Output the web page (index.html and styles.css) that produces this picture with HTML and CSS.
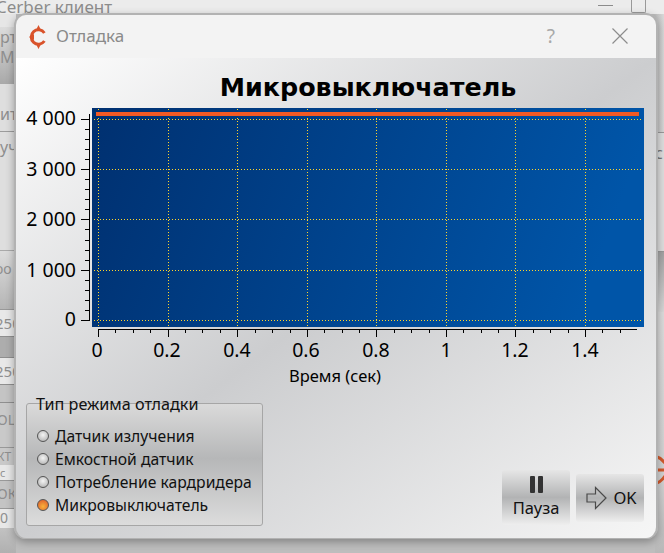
FILE: index.html
```html
<!DOCTYPE html>
<html>
<head>
  <meta charset="UTF-8">
  <title>Отладка</title>
  <link rel="stylesheet" href="styles.css">
</head>
<body>
  <div class="app">
    <div class="app-top">
      <span class="app-title">Cerber клиент</span>
      <div class="app-controls">
        <span class="app-min"></span>
        <span class="app-max"></span>
      </div>
    </div>
    <div class="app-main">
      <div class="side side-left">
        <div class="row r-a"></div>
        <div class="row r-b">рт<br>M</div>
        <div class="row r-c">ит</div>
        <div class="row r-d">уч</div>
        <div class="row r-e">оо</div>
        <div class="row r-f">250</div>
        <div class="row r-g"></div>
        <div class="row r-f">250</div>
        <div class="row r-h"></div>
        <div class="row r-i">ощ</div>
        <div class="row r-j">кт</div>
        <div class="row r-k">с</div>
        <div class="row r-l">ок</div>
        <div class="row r-m">0</div>
        <div class="row r-n"></div>
      </div>
      <div class="side side-right">
        <div class="row rr-a"></div>
        <div class="row rr-b">с</div>
        <div class="row rr-c"></div>
        <div class="row rr-d"></div>
        <svg class="rr-logo" width="10" height="40" viewBox="654 450 10 40">
          <path d="M654 456 Q660 458 664 463 M654 470 H664 M654 484 Q660 482 664 476" fill="none" stroke="#d2592c" stroke-width="3"/>
        </svg>
      </div>
    </div>
  </div>

  <div class="dialog">
    <div class="titlebar">
      <svg class="logo" width="20" height="26" viewBox="28 22 20 26">
        <path d="M44.4 31 A7.2 7.2 0 1 0 44.4 39" fill="none" stroke="#d9532b" stroke-width="3"/>
        <path d="M38.5 23 L41.5 29 H35.5 Z M38.5 47 L41.5 41 H35.5 Z M29 35 L34 32 V38 Z" fill="#d9532b"/>
      </svg>
      <span class="dialog-name">Отладка</span>
      <span class="help">?</span>
      <svg class="close" width="16" height="16" viewBox="0 0 16 16">
        <path d="M0.5 0.5 L15.5 15.5 M15.5 0.5 L0.5 15.5" stroke="#8c8c8c" stroke-width="1.2" fill="none"/>
      </svg>
    </div>

    <div class="body">
      <h1 class="plot-title">Микровыключатель</h1>

      <svg class="plot" width="638" height="286" viewBox="16 105 638 286">
        <defs>
          <linearGradient id="canvas" x1="0" y1="0" x2="1" y2="0.15">
            <stop offset="0" stop-color="#003070"/>
            <stop offset="1" stop-color="#0055a8"/>
          </linearGradient>
        </defs>
        <rect x="92" y="108" width="552" height="219" fill="url(#canvas)"/>

        <path class="grid" d="M98.5 109V326 M168.5 109V326 M237.5 109V326 M307.5 109V326 M376.5 109V326 M446.5 109V326 M515.5 109V326 M585.5 109V326"/>
        <path class="grid" d="M94 119.5H641 M94 169.5H641 M94 219.5H641 M94 270.5H641 M94 320.5H641"/>
        <rect x="96" y="112" width="543" height="4" fill="#f35a24"/>

        <!-- left axis -->
        <path class="axis" d="M89.5 114V321"/>
        <path class="axis" d="M81 119.5H90 M81 169.5H90 M81 219.5H90 M81 270.5H90 M81 320.5H90"/>
        <path class="axis" d="M85 129.5H90 M85 139.5H90 M85 149.5H90 M85 159.5H90 M85 179.5H90 M85 189.5H90 M85 199.5H90 M85 209.5H90 M85 229.5H90 M85 240.5H90 M85 250.5H90 M85 260.5H90 M85 280.5H90 M85 290.5H90 M85 300.5H90 M85 310.5H90"/>
        <text class="tick" x="76" y="125" text-anchor="end">4 000</text>
        <text class="tick" x="76" y="176" text-anchor="end">3 000</text>
        <text class="tick" x="76" y="226" text-anchor="end">2 000</text>
        <text class="tick" x="76" y="277" text-anchor="end">1 000</text>
        <text class="tick" x="76" y="326" text-anchor="end">0</text>

        <!-- bottom axis -->
        <path class="axis" d="M98 329.5H637"/>
        <path class="axis" d="M98.5 329V337 M168.5 329V337 M237.5 329V337 M307.5 329V337 M376.5 329V337 M446.5 329V337 M515.5 329V337 M585.5 329V337"/>
        <path class="axis" d="M115.5 329V333 M133.5 329V333 M150.5 329V333 M185.5 329V333 M202.5 329V333 M220.5 329V333 M255.5 329V333 M272.5 329V333 M290.5 329V333 M324.5 329V333 M342.5 329V333 M359.5 329V333 M394.5 329V333 M411.5 329V333 M429.5 329V333 M463.5 329V333 M481.5 329V333 M498.5 329V333 M533.5 329V333 M550.5 329V333 M568.5 329V333 M602.5 329V333 M620.5 329V333"/>
        <text class="tick" x="97" y="357" text-anchor="middle">0</text>
        <text class="tick" x="167" y="357" text-anchor="middle">0.2</text>
        <text class="tick" x="237" y="357" text-anchor="middle">0.4</text>
        <text class="tick" x="306" y="357" text-anchor="middle">0.6</text>
        <text class="tick" x="376" y="357" text-anchor="middle">0.8</text>
        <text class="tick" x="446" y="357" text-anchor="middle">1</text>
        <text class="tick" x="515" y="357" text-anchor="middle">1.2</text>
        <text class="tick" x="585" y="357" text-anchor="middle">1.4</text>
        <text class="axis-name" x="335" y="382" text-anchor="middle">Время (сек)</text>
      </svg>

      <div class="bottom">
        <fieldset class="modes">
          <legend>Тип режима отладки</legend>
          <label class="mode"><span class="led"></span>Датчик излучения</label>
          <label class="mode"><span class="led"></span>Емкостной датчик</label>
          <label class="mode"><span class="led"></span>Потребление кардридера</label>
          <label class="mode"><span class="led led-on"></span>Микровыключатель</label>
        </fieldset>
        <div class="buttons">
          <button class="btn btn-pause">
            <span class="pause-icon"><i></i><i></i></span>
            Пауза
          </button>
          <button class="btn btn-ok">
            <svg width="21" height="24" viewBox="0 0 21 24">
              <path d="M1 8 H9.5 V1.5 L20 12 L9.5 22.5 V16 H1 Z" fill="none" stroke="#4a4a4a" stroke-width="1.2"/>
            </svg>
            OK
          </button>
        </div>
      </div>
    </div>
  </div>
</body>
</html>
```

FILE: styles.css
```css
html, body {
  margin: 0;
  height: 100%;
  overflow: hidden;
}

body {
  font-family: "Noto Sans", sans-serif;
  background: #bdbdbd;
}

.app {
  height: 553px;
  display: flex;
  flex-direction: column;
  color: #8a8a8a;
}

.app-top {
  height: 14px;
  background: #ececec;
  display: flex;
  justify-content: space-between;
  overflow: hidden;
}

.app-title {
  font-size: 17px;
  line-height: 14px;
  margin-left: -4px;
  color: #8c8c8c;
}

.app-controls {
  display: flex;
  gap: 18px;
}

.app-min {
  width: 15px;
  height: 1px;
  margin-top: 5px;
  background: #8c8c8c;
}

.app-max {
  width: 13px;
  height: 12px;
  margin-right: 18px;
  border: 1px solid #999;
  border-top: none;
  border-radius: 0 0 2px 2px;
}

.app-main {
  flex: 1;
  display: flex;
  justify-content: space-between;
}

.side {
  display: flex;
  flex-direction: column;
  overflow: hidden;
  white-space: nowrap;
}

.side-left {
  width: 16px;
}

.side-right {
  width: 9px;
  position: relative;
}

.row {
  font-size: 16px;
  color: #8f8f8f;
  overflow: hidden;
}

.r-a { height: 14px; background: #e6e6e6; }
.r-b { height: 57px; background: linear-gradient(#dcdcdc, #a9a9a9); line-height: 20px; margin-top: -1px; }
.r-c { height: 47px; background: #dedede; border-bottom: 1px solid #9c9c9c; line-height: 60px; }
.r-d { height: 118px; background: #dedede; border-bottom: 1px solid #aaa; line-height: 30px; }
.r-e { height: 58px; background: linear-gradient(#dcdcdc, #b5b5b5); border-bottom: 1px solid #999; line-height: 36px; font-size: 14px; margin-left: -5px; }
.r-f { height: 26px; background: #e8e8e8; line-height: 26px; margin-left: -5px; font-size: 15px; }
.r-g { height: 20px; background: #adadad; border-top: 1px solid #8f8f8f; border-bottom: 1px solid #8f8f8f; }
.r-h { height: 17px; background: #c4c4c4; border-top: 1px solid #8f8f8f; border-bottom: 1px solid #8f8f8f; }
.r-i { height: 44px; background: #c9c9c9; border-bottom: 1px solid #999; line-height: 34px; text-transform: uppercase; font-size: 14px; margin-left: -3px; }
.r-j { height: 17px; background: #c9c9c9; line-height: 17px; text-transform: uppercase; font-size: 12px; margin-left: -3px; }
.r-k { height: 15px; background: #e8e8e8; line-height: 15px; font-size: 11px; }
.r-l { height: 27px; background: #c4c4c4; border-top: 1px solid #999; border-bottom: 1px solid #999; line-height: 26px; text-transform: uppercase; font-size: 14px; margin-left: -3px; }
.r-m { height: 19px; background: #e8e8e8; line-height: 18px; font-size: 14px; }
.r-n { flex: 1; background: linear-gradient(#c2c2c2, #b0b0b0); }

.rr-a { height: 118px; background: linear-gradient(90deg, #bdbdbd, #d8d8d8); border-bottom: 1px solid #999; }
.rr-b { height: 118px; background: #dedede; border-bottom: 1px solid #999; line-height: 40px; color: #777; }
.rr-c { height: 60px; background: linear-gradient(#a3a3a3, #d8d8d8); }
.rr-d { flex: 1; background: linear-gradient(#dcdcdc, #d2d2d2 70%, #b8b8b8); }

.rr-logo {
  position: absolute;
  left: 0;
  top: 436px;
}

.dialog {
  position: absolute;
  left: 14px;
  top: 13px;
  width: 640px;
  height: 523px;
  border: 2px solid #b2b2b2;
  border-width: 2px 2px 1px 2px;
  border-radius: 12px;
  overflow: hidden;
  display: flex;
  flex-direction: column;
  box-shadow: 0 3px 8px rgba(0,0,0,0.3);
}

.titlebar {
  height: 43px;
  flex: none;
  background: #f3f3f3;
  display: flex;
  align-items: center;
  padding-left: 12px;
}

.dialog-name {
  margin: 0 0 2px 8px;
  font-size: 17px;
  color: #8a8a8a;
}

.help {
  margin: 0 57px 2px auto;
  font-size: 19px;
  color: #a8a8a8;
}

.close {
  margin: 0 28px 2px 0;
}

.body {
  flex: 1;
  display: flex;
  flex-direction: column;
  background: linear-gradient(to bottom right, #ffffff, #cccdcf 50%, #f6f6f6);
}

.plot-title {
  margin: 0;
  height: 47px;
  padding: 13px 0 0 64px;
  box-sizing: border-box;
  font-family: "DejaVu Sans", sans-serif;
  text-align: center;
  font-size: 25.4px;
  line-height: 32px;
  color: #000;
}

.plot {
  display: block;
  flex: none;
}

.grid {
  fill: none;
  stroke: #ffd42a;
  stroke-width: 1;
  stroke-dasharray: 1 2;
}

.axis {
  fill: none;
  stroke: #000;
  stroke-width: 1;
}

.tick {
  font-family: "Noto Sans", sans-serif;
  font-size: 19.5px;
  fill: #000;
}

.axis-name {
  font-family: "Noto Sans", sans-serif;
  font-size: 16.5px;
  fill: #000;
}

.bottom {
  display: flex;
  justify-content: space-between;
  align-items: flex-end;
  padding: 12px 12px 0 10px;
}

.modes {
  width: 237px;
  height: 123px;
  box-sizing: border-box;
  margin: 0;
  padding: 20px 0 0 10px;
  border: 1px solid #a6a6a6;
  border-radius: 3px;
  background: linear-gradient(#dadada, #b6b7b8 45%, #dcdcdc);
  position: relative;
}

.modes legend {
  position: absolute;
  top: -9px;
  left: 6px;
  padding: 0 3px;
  font-size: 16.2px;
  line-height: 18px;
  color: #111;
}

.mode {
  display: flex;
  align-items: center;
  gap: 6px;
  height: 23px;
  font-size: 15.7px;
  color: #111;
}

.led {
  width: 10px;
  height: 10px;
  border-radius: 50%;
  border: 1px solid #555;
  background: radial-gradient(circle at 50% 40%, #f4f4f4, #a9a9a9);
}

.led-on {
  background: radial-gradient(circle at 50% 65%, #f9b23a, #d9532b);
}

.buttons {
  display: flex;
  align-items: center;
  gap: 6px;
  margin-bottom: 1px;
}

.btn {
  width: 68px;
  border: none;
  border-radius: 3px;
  padding: 0;
  font-family: inherit;
  font-size: 16.5px;
  color: #111;
  background: linear-gradient(#e6e6e6, #b2b3b4 50%, #eeeeee);
  display: flex;
  align-items: center;
  justify-content: center;
}

.btn-pause {
  height: 55px;
  flex-direction: column;
  gap: 3px;
}

.btn-ok {
  height: 48px;
  gap: 6px;
  padding-left: 3px;
}

.pause-icon {
  display: flex;
  gap: 3px;
}

.pause-icon i {
  display: block;
  width: 5px;
  height: 17px;
  border-radius: 1px;
  background: #333;
}
```
